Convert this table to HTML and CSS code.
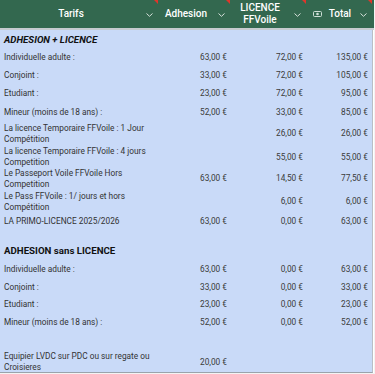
FILE: index.html
```html
<!DOCTYPE html>
<html lang="fr">
<head>
<meta charset="utf-8">
<title>Tarifs</title>
<link rel="stylesheet" href="styles.css">
</head>
<body>
<div class="sheet">
  <div class="head">
    <div class="hcell">
      <span class="hlabel">Tarifs</span>
      <svg class="chev" width="7" height="4" viewBox="0 0 7 4"><path d="M0.5 0.5 L3.5 3.3 L6.5 0.5" fill="none" stroke="#d6e0db" stroke-width="1"/></svg>
      <span class="flag"></span>
    </div>
    <div class="hcell">
      <span class="hlabel">Adhesion</span>
      <svg class="chev" width="7" height="4" viewBox="0 0 7 4"><path d="M0.5 0.5 L3.5 3.3 L6.5 0.5" fill="none" stroke="#d6e0db" stroke-width="1"/></svg>
      <span class="flag"></span>
    </div>
    <div class="hcell">
      <span class="hlabel">LICENCE<br>FFVoile</span>
      <svg class="chev" width="7" height="4" viewBox="0 0 7 4"><path d="M0.5 0.5 L3.5 3.3 L6.5 0.5" fill="none" stroke="#d6e0db" stroke-width="1"/></svg>
      <span class="flag"></span>
    </div>
    <div class="hcell">
      <span class="hlabel with-icon">
        <svg class="money" width="9" height="6" viewBox="0 0 9 6"><rect x="0.5" y="0.5" width="8" height="5" rx="1" fill="none" stroke="#cfded6" stroke-width="1"/><circle cx="4.5" cy="3" r="1.3" fill="#cfded6"/></svg>
        Total
      </span>
      <svg class="chev" width="7" height="4" viewBox="0 0 7 4"><path d="M0.5 0.5 L3.5 3.3 L6.5 0.5" fill="none" stroke="#d6e0db" stroke-width="1"/></svg>
      <span class="flag"></span>
    </div>
  </div>

  <div class="body">
    <div class="row h18"><div class="title italic">ADHESION + LICENCE</div><div></div><div></div><div></div></div>
    <div class="row h18"><div class="lbl">Individuelle adulte :</div><div class="num">63,00 €</div><div class="num">72,00 €</div><div class="num tot">135,00 €</div></div>
    <div class="row h18"><div class="lbl">Conjoint :</div><div class="num">33,00 €</div><div class="num">72,00 €</div><div class="num tot">105,00 €</div></div>
    <div class="row h19"><div class="lbl">Etudiant :</div><div class="num">23,00 €</div><div class="num">72,00 €</div><div class="num tot">95,00 €</div></div>
    <div class="row h18"><div class="lbl">Mineur (moins de 18 ans) :</div><div class="num">52,00 €</div><div class="num">33,00 €</div><div class="num tot">85,00 €</div></div>
    <div class="row h25"><div class="lbl">La licence Temporaire FFVoile : 1 Jour Compétition</div><div class="num"></div><div class="num">26,00 €</div><div class="num tot">26,00 €</div></div>
    <div class="row h21"><div class="lbl">La licence Temporaire FFVoile : 4 jours Competition</div><div class="num"></div><div class="num">55,00 €</div><div class="num tot">55,00 €</div></div>
    <div class="row h23"><div class="lbl">Le Passeport Voile FFVoile Hors Competition</div><div class="num">63,00 €</div><div class="num">14,50 €</div><div class="num tot">77,50 €</div></div>
    <div class="row h23"><div class="lbl">Le Pass FFVoile : 1/ jours et hors Compétition</div><div class="num"></div><div class="num">6,00 €</div><div class="num tot">6,00 €</div></div>
    <div class="row h17"><div class="lbl">LA PRIMO-LICENCE 2025/2026</div><div class="num">63,00 €</div><div class="num">0,00 €</div><div class="num tot">63,00 €</div></div>
    <div class="row h10"><div></div><div></div><div></div><div></div></div>
    <div class="row h20"><div class="title">ADHESION sans LICENCE</div><div></div><div></div><div></div></div>
    <div class="row h18"><div class="lbl">Individuelle adulte :</div><div class="num">63,00 €</div><div class="num">0,00 €</div><div class="num tot">63,00 €</div></div>
    <div class="row h18"><div class="lbl">Conjoint :</div><div class="num">33,00 €</div><div class="num">0,00 €</div><div class="num tot">33,00 €</div></div>
    <div class="row h17"><div class="lbl">Etudiant :</div><div class="num">23,00 €</div><div class="num">0,00 €</div><div class="num tot">23,00 €</div></div>
    <div class="row h19"><div class="lbl">Mineur (moins de 18 ans) :</div><div class="num">52,00 €</div><div class="num">0,00 €</div><div class="num tot">52,00 €</div></div>
    <div class="row h19"><div></div><div></div><div></div><div></div></div>
    <div class="row h21"><div class="lbl">Equipier LVDC sur PDC ou sur regate ou Croisieres</div><div class="num">20,00 €</div><div class="num"></div><div class="num tot"></div></div>
  </div>
</div>
</body>
</html>
```

FILE: styles.css
```css
html, body {
  margin: 0;
  padding: 0;
  background: #f3f3f3;
}

body {
  font-family: Roboto, "Liberation Sans", Arial, sans-serif;
  color: #333333;
  width: 375px;
  height: 374px;
  overflow: hidden;
}

.sheet {
  width: 374px;
  background: #ffffff;
}

.head {
  display: grid;
  grid-template-columns: 158px 72px 76px 68px;
  height: 28px;
  background: #33684f;
  border-bottom: 2px solid #c6cbcf;
}

.hcell {
  position: relative;
  display: flex;
  align-items: center;
  padding-right: 16px;
}

.hlabel {
  flex: 1;
  text-align: center;
  color: #ffffff;
  font-size: 10px;
  font-weight: 500;
  line-height: 12px;
  display: flex;
  justify-content: center;
  align-items: center;
  gap: 7px;
}

.chev {
  position: absolute;
  right: 5px;
  top: 13px;
}

.hcell:last-child .chev {
  right: 7px;
}

.flag {
  position: absolute;
  top: 0;
  right: 0;
  width: 0;
  height: 0;
  border-top: 4px solid #e0352b;
  border-left: 4px solid transparent;
}

.hcell:last-child .flag {
  right: 2px;
}

.money {
  display: block;
}

.body {
  width: 372px;
  background: #c9daf8;
  border-right: 1px solid #b9bfc6;
  border-bottom: 1px solid #9aa3ab;
}

.row {
  display: grid;
  grid-template-columns: 158px 72px 76px 66px;
  align-items: center;
  font-size: 8.3px;
  line-height: 11px;
}

.h10 { height: 10px; }
.h17 { height: 17px; }
.h18 { height: 18px; }
.h19 { height: 19px; }
.h20 { height: 20px; }
.h21 { height: 21px; }
.h23 { height: 23px; }
.h25 { height: 25px; }

.lbl {
  padding-left: 4px;
  padding-right: 4px;
  color: #333333;
}

.num {
  text-align: right;
  padding-right: 3px;
  color: #3a3a3a;
}

.num.tot {
  padding-right: 4px;
}

.title {
  padding-left: 4px;
  font-size: 9.7px;
  font-weight: 700;
  color: #111111;
  white-space: nowrap;
}

.title.italic {
  font-style: italic;
}
```
